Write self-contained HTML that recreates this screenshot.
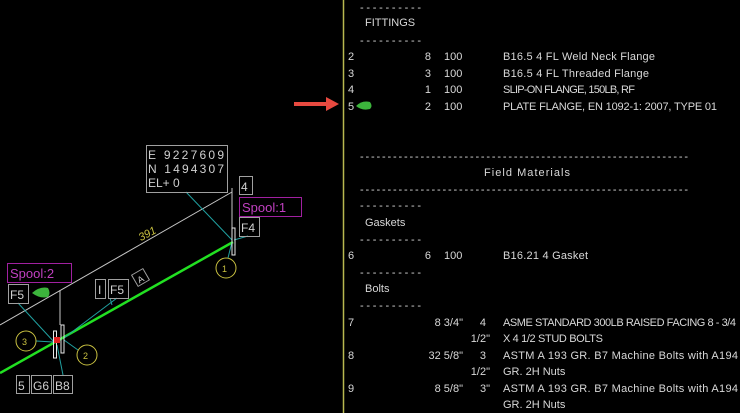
<!DOCTYPE html>
<html><head><style>
html,body{margin:0;padding:0;background:#000;width:740px;height:413px;overflow:hidden}
svg{display:block}
text{font-family:"Liberation Sans",sans-serif;font-size:11px;fill:#d8d8d8}
.m{fill:#c040c0;font-size:13px}
.y{fill:#c8c040}
.b{fill:#d0d0d0;font-size:12px}
</style></head><body>
<svg width="740" height="413" viewBox="0 0 740 413">
<line x1="343.5" y1="0" x2="343.5" y2="413" stroke="#b8b850" stroke-width="1.5"/>
<path d="M294 102 L326 102 L326 97 L339 104 L326 111 L326 106 L294 106 Z" fill="#e84a40"/>
<g>
<text x="360" y="11" textLength="61">----------</text>
<text x="365" y="26">FITTINGS</text>
<text x="360" y="44" textLength="61">----------</text>
<text x="348" y="60">2</text><text x="431" y="60" text-anchor="end">8</text><text x="444" y="60">100</text><text x="503" y="60" textLength="152">B16.5 4 FL Weld Neck Flange</text>
<text x="348" y="77">3</text><text x="431" y="77" text-anchor="end">3</text><text x="444" y="77">100</text><text x="503" y="77" textLength="146">B16.5 4 FL Threaded Flange</text>
<text x="348" y="93">4</text><text x="431" y="93" text-anchor="end">1</text><text x="444" y="93">100</text><text x="503" y="93" textLength="132">SLIP-ON FLANGE, 150LB, RF</text>
<text x="348" y="110">5</text><text x="431" y="110" text-anchor="end">2</text><text x="444" y="110">100</text><text x="503" y="110" textLength="214">PLATE FLANGE, EN 1092-1: 2007, TYPE 01</text>
<path d="M356 106 Q362 100 370 102 Q373 106 370 109 Q362 111 356 106Z" fill="#3cb43c"/>
<text x="360" y="160" textLength="328">------------------------------------------------------------</text>
<text x="484" y="176" textLength="86">Field Materials</text>
<text x="360" y="193" textLength="328">------------------------------------------------------------</text>
<text x="360" y="209" textLength="61">----------</text>
<text x="365" y="226">Gaskets</text>
<text x="360" y="243" textLength="61">----------</text>
<text x="348" y="259">6</text><text x="431" y="259" text-anchor="end">6</text><text x="444" y="259">100</text><text x="503" y="259" textLength="85">B16.21 4 Gasket</text>
<text x="360" y="276" textLength="61">----------</text>
<text x="365" y="292">Bolts</text>
<text x="360" y="309" textLength="61">----------</text>
<text x="348" y="326">7</text><text x="463" y="326" text-anchor="end">8 3/4"</text><text x="486" y="326" text-anchor="end">4</text><text x="503" y="326" textLength="233">ASME STANDARD 300LB RAISED FACING 8 - 3/4</text>
<text x="490" y="342" text-anchor="end">1/2"</text><text x="503" y="342" textLength="100">X 4 1/2 STUD BOLTS</text>
<text x="348" y="359">8</text><text x="463" y="359" text-anchor="end">32 5/8"</text><text x="486" y="359" text-anchor="end">3</text><text x="503" y="359" textLength="235">ASTM A 193 GR. B7 Machine Bolts with A194</text>
<text x="490" y="375" text-anchor="end">1/2"</text><text x="503" y="375">GR. 2H Nuts</text>
<text x="348" y="392">9</text><text x="463" y="392" text-anchor="end">8 5/8"</text><text x="490" y="392" text-anchor="end">3"</text><text x="503" y="392" textLength="235">ASTM A 193 GR. B7 Machine Bolts with A194</text>
<text x="503" y="408">GR. 2H Nuts</text>
</g>
<g fill="none">
<line x1="0" y1="325" x2="232" y2="192" stroke="#c8c8c8" stroke-width="1"/>
<line x1="232" y1="188" x2="232" y2="230" stroke="#c8c8c8"/>
<line x1="60" y1="290" x2="60" y2="325" stroke="#c8c8c8"/>
<line x1="0" y1="373" x2="233" y2="242" stroke="#22e022" stroke-width="2.5"/>
<g stroke="#20a0a0" stroke-width="1">
<line x1="186" y1="192" x2="232" y2="240"/>
<line x1="248" y1="236" x2="234" y2="240"/>
<line x1="228" y1="258" x2="232" y2="242"/>
<line x1="18" y1="303" x2="55" y2="343"/>
<line x1="117" y1="298" x2="64" y2="338"/>
<line x1="110" y1="298" x2="112" y2="305"/>
<line x1="36" y1="341" x2="53" y2="342"/>
<line x1="78" y1="350" x2="64" y2="340"/>
<line x1="63" y1="375" x2="57" y2="345"/>
</g>
<g stroke="#e8e8e8" stroke-width="1">
<rect x="232" y="228" width="3" height="27"/>
<rect x="53.5" y="331" width="3" height="27"/>
<rect x="61" y="325" width="3" height="28"/>
</g>
<rect x="54" y="337" width="6" height="6" fill="#e02020" stroke="none"/>
<g stroke="#a0a0a0" stroke-width="1">
<rect x="146.5" y="145.5" width="81" height="47"/>
<rect x="239.5" y="176.5" width="13" height="18"/>
<rect x="239.5" y="217.5" width="20" height="19"/>
<rect x="8.5" y="284.5" width="20" height="19"/>
<rect x="95.5" y="279.5" width="10" height="19"/>
<rect x="108.5" y="279.5" width="20" height="19"/>
<rect x="16.5" y="375.5" width="13" height="18"/>
<rect x="31.5" y="375.5" width="20" height="18"/>
<rect x="53.5" y="375.5" width="19" height="18"/>
<rect x="134" y="271" width="13" height="13" transform="rotate(-30 140.5 277.5)"/>
</g>
<g stroke="#a020a0" stroke-width="1">
<rect x="239.5" y="197.5" width="62" height="19"/>
<rect x="7.5" y="263.5" width="64" height="19"/>
</g>
<g stroke="#c8c040" stroke-width="1">
<circle cx="226" cy="268" r="10"/>
<circle cx="26" cy="341" r="10"/>
<circle cx="87" cy="355" r="10"/>
</g>
</g>
<path d="M32 293 Q40 286 48 288 Q51 293 48 297 Q40 299 32 293Z" fill="#3cb43c"/>
<text class="b" x="148" y="159" textLength="76">E 9227609</text>
<text class="b" x="148" y="173" textLength="76">N 1494307</text>
<text class="b" x="148" y="187">EL+ 0</text>
<text class="b" x="241" y="191">4</text>
<text class="m" x="242" y="212">Spool:1</text>
<text class="b" x="241" y="232">F4</text>
<text class="m" x="10" y="278">Spool:2</text>
<text class="b" x="10" y="299">F5</text>
<text class="b" x="98" y="294">I</text>
<text class="b" x="110" y="294">F5</text>
<text class="b" x="137" y="282" transform="rotate(-30 141 278)" style="font-size:9px">A</text>
<text class="b" x="18" y="390">5</text>
<text class="b" x="33" y="390">G6</text>
<text class="b" x="55" y="390">B8</text>
<text class="y" x="138" y="238" transform="rotate(-28 146 234)" style="font-style:italic">391</text>
<text class="y" x="222" y="272" style="font-size:9px">1</text>
<text class="y" x="22" y="345" style="font-size:9px">3</text>
<text class="y" x="83" y="359" style="font-size:9px">2</text>
</svg>
</body></html>
